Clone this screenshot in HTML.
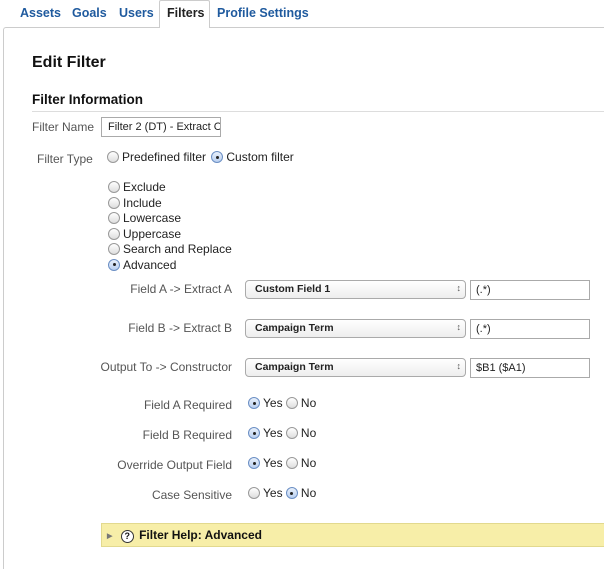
<!DOCTYPE html>
<html><head><style>
*{margin:0;padding:0;box-sizing:border-box}
html,body{width:604px;height:569px;overflow:hidden}
body{background:#fff;font-family:"Liberation Sans",Arial,sans-serif;font-size:12px;color:#222;position:relative}
.a{position:absolute;white-space:nowrap}
.tab{position:absolute;top:6px;font-weight:bold;font-size:12.5px;color:#1f5a9e}
.lbl{color:#555;font-size:12px}
.r{display:inline-block;width:12px;height:12px;border:1px solid #999;border-radius:50%;background:linear-gradient(#fff,#ddd);vertical-align:-2px;margin-right:3px;position:relative}
.r.on{border-color:#6b8fc4;background:linear-gradient(#e8f0fb,#b9cff0)}
.r.on:after{content:"";position:absolute;left:3.5px;top:3.5px;width:3px;height:3px;border-radius:50%;background:#222}
.sel{position:absolute;left:245px;width:221px;height:19px;border:1px solid #aaa;border-radius:4px;background:linear-gradient(#fff,#eee);font-size:10.5px;font-weight:bold;color:#222;padding:2px 0 0 9px}
.sel:after{content:"\2195";position:absolute;right:4px;top:2px;font-size:9px;color:#555}
.inp{position:absolute;left:470px;width:120px;height:20px;border:1px solid #aaa;font-size:11px;padding:3px 0 0 5px}
.rl{position:absolute;width:232px;text-align:right;left:0;color:#555}
</style></head><body>
<div class="a" style="left:3px;top:27px;width:601px;height:542px;border:1px solid #ccc;border-right:none;border-bottom:none;border-radius:3px 0 0 0"></div>
<div class="a" style="left:159px;top:0;width:51px;height:28px;border:1px solid #ccc;border-bottom:none;background:#fff;border-radius:2px 2px 0 0"></div>
<span class="tab" style="left:20px">Assets</span>
<span class="tab" style="left:72px">Goals</span>
<span class="tab" style="left:119px">Users</span>
<span class="tab" style="left:167px;color:#222">Filters</span>
<span class="tab" style="left:217px">Profile Settings</span>
<div class="a" style="left:32px;top:54px;font-size:16px;font-weight:bold;color:#111">Edit Filter</div>
<div class="a" style="left:32px;top:92px;font-size:13.5px;font-weight:bold;color:#111">Filter Information</div>
<div class="a" style="left:32px;top:111px;width:572px;height:1px;background:#ddd"></div>
<div class="a lbl" style="left:32px;top:120px">Filter Name</div>
<div class="a" style="left:101px;top:117px;width:120px;height:20px;border:1px solid #aaa;font-size:11px;padding:3px 0 0 6px;overflow:hidden">Filter 2 (DT) - Extract C</div>
<div class="a lbl" style="left:37px;top:152px">Filter Type</div>
<div class="a" style="left:107px;top:150px"><span class="r"></span>Predefined filter <span class="r on" style="margin-left:2px"></span>Custom filter</div>
<div class="a" style="left:108px;top:180px;line-height:15.6px">
<div><span class="r"></span>Exclude</div>
<div><span class="r"></span>Include</div>
<div><span class="r"></span>Lowercase</div>
<div><span class="r"></span>Uppercase</div>
<div><span class="r"></span>Search and Replace</div>
<div><span class="r on"></span>Advanced</div>
</div>
<div class="rl" style="top:282px">Field A -&gt; Extract A</div>
<div class="sel" style="top:280px">Custom Field 1</div><div class="inp" style="top:280px">(.*)</div>
<div class="rl" style="top:321px">Field B -&gt; Extract B</div>
<div class="sel" style="top:319px">Campaign Term</div><div class="inp" style="top:319px">(.*)</div>
<div class="rl" style="top:360px">Output To -&gt; Constructor</div>
<div class="sel" style="top:358px">Campaign Term</div><div class="inp" style="top:358px">$B1 ($A1)</div>
<div class="rl" style="top:398px">Field A Required</div>
<div class="a" style="left:248px;top:396px"><span class="r on"></span>Yes <span class="r"></span>No</div>
<div class="rl" style="top:428px">Field B Required</div>
<div class="a" style="left:248px;top:426px"><span class="r on"></span>Yes <span class="r"></span>No</div>
<div class="rl" style="top:458px">Override Output Field</div>
<div class="a" style="left:248px;top:456px"><span class="r on"></span>Yes <span class="r"></span>No</div>
<div class="rl" style="top:488px">Case Sensitive</div>
<div class="a" style="left:248px;top:486px"><span class="r"></span>Yes <span class="r on"></span>No</div>
<div class="a" style="left:101px;top:523px;width:503px;height:24px;background:#f7eea8;border:1px solid #e2d98e;border-right:none;font-weight:bold;color:#111;padding:4px 0 0 5px">
<span style="font-size:7px;color:#777;vertical-align:1px">&#9654;</span>
<span style="display:inline-block;width:13px;height:13px;border:1px solid #333;border-radius:50%;font-size:9px;text-align:center;line-height:11px;margin:0 2px 0 5px;background:#fff">?</span> Filter Help: Advanced</div>
</body></html>
